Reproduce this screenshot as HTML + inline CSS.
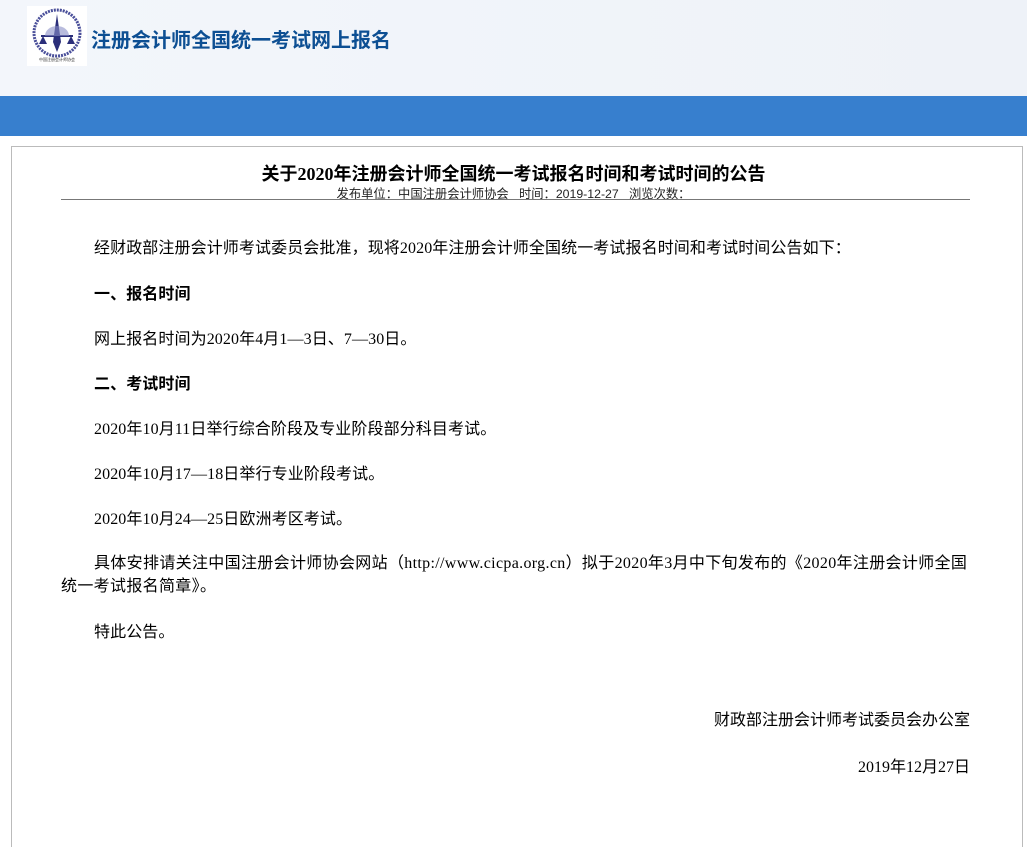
<!DOCTYPE html>
<html><head><meta charset="utf-8"><style>
*{margin:0;padding:0}
body{width:1027px;height:834px;overflow:hidden;background:#fff;position:relative;font-family:"Liberation Serif","Noto Sans CJK SC",serif;color:#000}
.hdr{position:absolute;left:0;top:0;width:1027px;height:96px;background:linear-gradient(90deg,#f3f6fb,#eef2f8)}
.band{position:absolute;left:0;top:96px;width:1027px;height:40px;background:#377fce}
.logo{position:absolute;left:27px;top:6px;width:60px;height:60px;background:#fff}
.site{position:absolute;left:91px;top:24px;font:bold 20px "Liberation Sans","Noto Sans CJK SC",sans-serif;color:#0d4f93}
.box{position:absolute;left:11px;top:146px;width:1010px;height:700px;border:1px solid #bbb;border-bottom:none}
.title{position:absolute;left:0;width:1027px;top:160px;text-align:center;font:bold 18px "Liberation Serif","Noto Sans CJK SC",serif}
.meta{position:absolute;left:0;width:1027px;top:184px;text-align:center;font:12.3px "Liberation Sans","Noto Sans CJK SC",sans-serif;color:#222}
.rule{position:absolute;left:61px;top:199px;width:909px;height:1px;background:#777}
p{position:absolute;left:61px;width:915px;font-size:16px;line-height:23px;white-space:nowrap;letter-spacing:0.1px}
.i{text-indent:33px}
b{font-weight:bold}
.r{left:auto;right:57px;width:auto;letter-spacing:0}
</style></head><body>
<div class="hdr"></div>
<div class="logo"><svg width="60" height="60" viewBox="0 0 60 60"><circle cx="30" cy="27" r="23" fill="none" stroke="#4a4f9a" stroke-width="3" stroke-dasharray="2 1"/><path d="M30 8 L34 36 L30 46 L26 36 Z" fill="#2b2f7a"/><path d="M14 30 H46" stroke="#2b2f7a" stroke-width="2"/><path d="M12 38 L16 30 L20 38 Z M40 38 L44 30 L48 38 Z" fill="#2b2f7a"/><path d="M18 30 A12 10 0 0 1 42 30" fill="#8a8fc6" opacity=".6"/><text x="30" y="55" font-size="4" text-anchor="middle" fill="#333" font-family="Noto Sans CJK SC">中国注册会计师协会</text></svg></div>
<div class="site">注册会计师全国统一考试网上报名</div>
<div class="band"></div>
<div class="box"></div>
<div class="title">关于2020年注册会计师全国统一考试报名时间和考试时间的公告</div>
<div class="meta">发布单位：中国注册会计师协会&nbsp;&nbsp; 时间：2019-12-27&nbsp;&nbsp; 浏览次数：</div>
<div class="rule"></div>
<p class="i" style="top:237px">经财政部注册会计师考试委员会批准，现将2020年注册会计师全国统一考试报名时间和考试时间公告如下：</p>
<p class="i" style="top:283px"><b>一、报名时间</b></p>
<p class="i" style="top:328px">网上报名时间为2020年4月1—3日、7—30日。</p>
<p class="i" style="top:373px"><b>二、考试时间</b></p>
<p class="i" style="top:418px">2020年10月11日举行综合阶段及专业阶段部分科目考试。</p>
<p class="i" style="top:463px">2020年10月17—18日举行专业阶段考试。</p>
<p class="i" style="top:508px">2020年10月24—25日欧洲考区考试。</p>
<p style="top:552px;text-indent:33px;letter-spacing:0.33px">具体安排请关注中国注册会计师协会网站（http://www.cicpa.org.cn）拟于2020年3月中下旬发布的《2020年注册会计师全国<br><span style="display:inline-block;text-indent:0">统一考试报名简章》。</span></p>
<p class="i" style="top:621px">特此公告。</p>
<p class="r" style="top:709px">财政部注册会计师考试委员会办公室</p>
<p class="r" style="top:756px">2019年12月27日</p>
</body></html>
